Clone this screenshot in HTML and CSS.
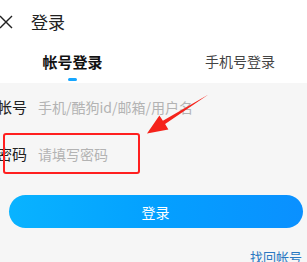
FILE: index.html
```html
<!DOCTYPE html>
<html lang="zh">
<head>
<meta charset="utf-8">
<link rel="stylesheet" href="styles.css">
</head>
<body>
<div class="page">
  <header class="header">
    <svg class="close" width="14" height="14" viewBox="0 0 14 14"><path d="M1 1 L13 13 M13 1 L1 13" stroke="#222" stroke-width="1.4" fill="none"/></svg>
    <span class="title">登录</span>
  </header>
  <nav class="tabs">
    <div class="tab active">帐号登录<span class="indicator"></span></div>
    <div class="tab other">手机号登录</div>
  </nav>
  <main class="form">
    <div class="row"><span class="label">帐号</span><span class="ph">手机/酷狗id/邮箱/用户名</span></div>
    <div class="row"><span class="label">密码</span><span class="ph">请填写密码</span></div>
    <button class="btn">登录</button>
    <div class="links"><span class="link">找回帐号</span></div>
    <div class="mark"></div>
    <svg class="arrow" width="307" height="262" viewBox="0 0 307 262"><polygon points="208.5,94.5 165.1,124.1 168.4,129.6 147,133.5 159.4,115.4 162.9,120.7" fill="#f5231b"/></svg>
  </main>
</div>
</body>
</html>
```
FILE: styles.css
```css
* { box-sizing: border-box; }
html, body { margin: 0; padding: 0; }
body {
  width: 307px;
  height: 262px;
  overflow: hidden;
  background: #f6f6f6;
  font-family: "Noto Sans CJK SC", "Noto Sans", sans-serif;
}
.page { position: relative; width: 307px; height: 262px; }
.header {
  height: 43px;
  background: #fff;
  display: flex;
  align-items: center;
}
.close { margin-left: -1px; margin-top: 0px; }
.title {
  margin-left: 18px;
  font-size: 17px;
  color: #222;
  line-height: 20px;
}
.tabs {
  height: 40px;
  background: #fff;
  display: flex;
}
.tab {
  position: relative;
  display: flex;
  align-items: center;
  height: 40px;
  padding-bottom: 4px;
}
.tab.active {
  width: 145px;
  justify-content: center;
  font-size: 15px;
  font-weight: 700;
  color: #111;
}
.tab.other {
  padding-left: 60px;
  font-size: 14px;
  color: #444;
}
.indicator {
  position: absolute;
  left: 68px;
  top: 35px;
  width: 9px;
  height: 3px;
  border-radius: 2px;
  background: #16a6ff;
}
.form {
  position: relative;
  height: 179px;
  background: #f6f6f6;
  padding-right: 4px;
}
.row {
  height: 47px;
  display: flex;
  align-items: center;
  margin-left: -3px;
}
.label {
  width: 41px;
  font-size: 15px;
  color: #222;
  line-height: 18px;
}
.ph {
  font-size: 14px;
  color: #b3b3b3;
  line-height: 18px;
}
.btn {
  display: block;
  margin: 18px 0 0 9px;
  width: 294px;
  height: 33px;
  border: none;
  border-radius: 17px;
  background: linear-gradient(90deg, #09b3ff 0%, #04a0ff 50%, #0a90ff 100%);
  color: #fff;
  font-family: inherit;
  font-size: 14px;
  padding: 0;
  padding-right: 1px;
}
.links {
  display: flex;
  justify-content: flex-end;
  margin-top: 21px;
  padding-right: 1px;
}
.link {
  font-size: 13px;
  line-height: 16px;
  color: #2a78c2;
}
.mark {
  position: absolute;
  left: 3px;
  top: 50px;
  width: 137px;
  height: 41px;
  border: 2px solid #ff1f1f;
  border-radius: 3px;
}
.arrow {
  position: absolute;
  left: 0;
  top: -83px;
}
```
